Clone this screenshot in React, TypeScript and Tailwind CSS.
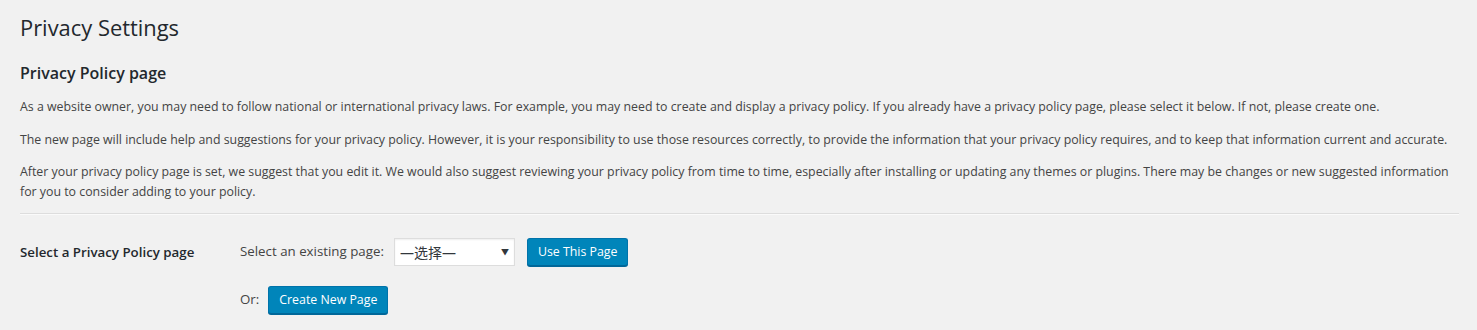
import { useState } from 'react';

const FONT = "font-['Open_Sans','Noto_Sans_CJK_SC',sans-serif]";

const PARAGRAPHS = [
  'As a website owner, you may need to follow national or international privacy laws. For example, you may need to create and display a privacy policy. If you already have a privacy policy page, please select it below. If not, please create one.',
  'The new page will include help and suggestions for your privacy policy. However, it is your responsibility to use those resources correctly, to provide the information that your privacy policy requires, and to keep that information current and accurate.',
  'After your privacy policy page is set, we suggest that you edit it. We would also suggest reviewing your privacy policy from time to time, especially after installing or updating any themes or plugins. There may be changes or new suggested information for you to consider adding to your policy.',
];

function WpButton({ children }: { children: string }) {
  return (
    <button className="h-[28px] px-[10px] pb-px rounded-[3px] bg-[#0085ba] border border-[#0073aa] border-b-[#006799] shadow-[0_1px_0_#006799] text-white text-[12.35px] leading-[26px]">
      {children}
    </button>
  );
}

export default function App() {
  const [page, setPage] = useState('0');

  return (
    <main className={`min-h-[330px] bg-[#f1f1f1] ${FONT} text-[#444] text-[12.35px]`}>
      <div className="pl-5 pr-[18px] pt-[13px]">
        <h1 className="text-[21.9px] leading-[30px] text-[#23282d] font-normal">Privacy Settings</h1>

        <h2 className="mt-[19px] text-[16px] leading-[22px] font-semibold text-[#23282d]">Privacy Policy page</h2>

        <div className="mt-[13px] space-y-[13px]">
          {PARAGRAPHS.map((text) => (
            <p key={text} className="leading-[19.5px]">
              {text}
            </p>
          ))}
        </div>

        <hr className="mt-[12px] border-0 border-t border-t-[#ddd] border-b border-b-[#fafafa]" />

        <div className="flex pt-[23px]">
          <div className="w-[220px] shrink-0 pt-[5px] text-[13.3px] font-semibold leading-[18px] text-[#23282d]">
            Select a Privacy Policy page
          </div>
          <div className="flex flex-col gap-[20px] text-[13.3px]">
            <div className="flex items-center">
              <span className="mr-[10px]">Select an existing page:</span>
              <div className="relative w-[121px] h-[28px] bg-white border border-[#ddd] shadow-[inset_0_1px_2px_rgba(0,0,0,0.07)]">
                <select
                  value={page}
                  onChange={(e) => setPage(e.target.value)}
                  className="appearance-none w-full h-full bg-transparent pl-[5px] pr-5 text-[14px] text-[#32373c] outline-none"
                >
                  <option value="0">—选择—</option>
                </select>
                <span className="pointer-events-none absolute right-[5px] top-[8px] text-[8px] leading-[10px] text-[#32373c]">▼</span>
              </div>
              <div className="ml-[12px]">
                <WpButton>Use This Page</WpButton>
              </div>
            </div>
            <div className="flex items-center">
              <span className="mr-[9px]">Or:</span>
              <WpButton>Create New Page</WpButton>
            </div>
          </div>
        </div>
      </div>
    </main>
  );
}
